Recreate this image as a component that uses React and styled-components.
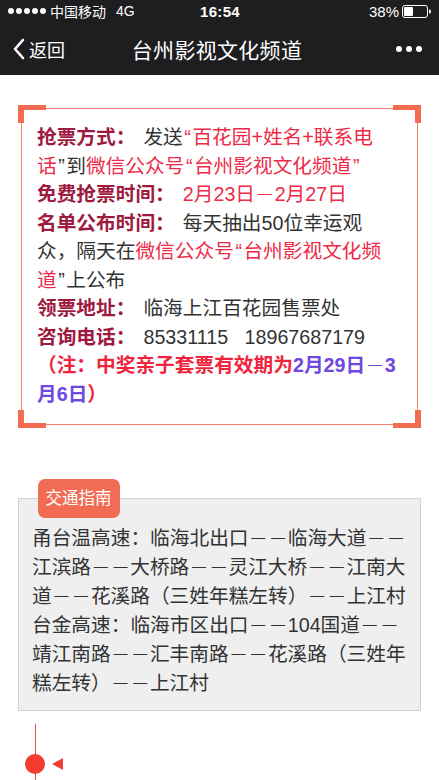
import React from 'react';
import styled, { createGlobalStyle } from 'styled-components';

const GlobalStyle = createGlobalStyle`
  html, body {
    margin: 0;
    padding: 0;
    background: #ffffff;
  }
  body {
    font-family: "Liberation Sans", "Noto Sans CJK SC", sans-serif;
    color: #333333;
    text-spacing-trim: space-all;
  }
`;

// splits a string on em dashes so each dash can be drawn with its own gaps
const withDashes = text =>
  text.split('—').flatMap((part, i) =>
    i === 0 ? [part] : [<Dash key={i}>—</Dash>, part]
  );

class App extends React.Component {
  render() {
    return (
      <Page>
        <GlobalStyle />
        <StatusBar>
          <Carrier>
            <Signal>
              {[0, 1, 2, 3, 4].map(i => (
                <SignalDot key={i} />
              ))}
            </Signal>
            <span>中国移动</span>
            <Network>4G</Network>
          </Carrier>
          <Clock>16:54</Clock>
          <Power>
            <span>38%</span>
            <svg width="30" height="13" viewBox="0 0 30 13">
              <rect x="0.5" y="0.5" width="25" height="12" rx="2.5" fill="none" stroke="#fff" strokeWidth="1" />
              <rect x="2" y="2" width="9" height="9" rx="1" fill="#fff" />
              <rect x="27" y="4.5" width="1.8" height="4" rx="0.8" fill="#fff" />
            </svg>
          </Power>
        </StatusBar>

        <NavBar>
          <Back>
            <svg width="14" height="22" viewBox="0 0 14 22">
              <polyline points="11,2 3,11 11,20" fill="none" stroke="#fff" strokeWidth="2.6" strokeLinecap="round" strokeLinejoin="round" />
            </svg>
            <span>返回</span>
          </Back>
          <NavTitle>台州影视文化频道</NavTitle>
          <More>
            <MoreDot />
            <MoreDot />
            <MoreDot />
          </More>
        </NavBar>

        <Frame>
          <Corner top left />
          <Corner top right />
          <Corner bottom left />
          <Corner bottom right />
          <FrameBody>
            <Line>
              <Label>抢票方式：</Label>发送<Red><Quote>“</Quote>百花园+姓名+联系电话</Red><Quote>”</Quote>到
              <Red>微信公众号<Quote>“</Quote>台州影视文化频道<Quote>”</Quote></Red>
            </Line>
            <Line>
              <Label>免费抢票时间：</Label>
              <Red>{withDashes('2月23日—2月27日')}</Red>
            </Line>
            <Line>
              <Label>名单公布时间：</Label>每天抽出50位幸运观众，隔天在
              <Red>微信公众号<Quote>“</Quote>台州影视文化频道</Red><Quote>”</Quote>上公布
            </Line>
            <Line>
              <Label>领票地址：</Label>临海上江百花园售票处
            </Line>
            <Line>
              <Label>咨询电话：</Label>85331115{'\u00a0\u00a0\u00a0'}18967687179
            </Line>
            <Line>
              <Note>（注：中奖亲子套票有效期为</Note>
              <Purple>{withDashes('2月29日—3月6日')}</Purple>
              <Note>）</Note>
            </Line>
          </FrameBody>
        </Frame>

        <Guide>
          <Tab>交通指南</Tab>
          <GuideText>
            {withDashes(
              '甬台温高速：临海北出口——临海大道——江滨路——大桥路——灵江大桥——江南大道——花溪路（三姓年糕左转）——上江村'
            )}
          </GuideText>
          <GuideText>
            {withDashes(
              '台金高速：临海市区出口——104国道——靖江南路——汇丰南路——花溪路（三姓年糕左转）——上江村'
            )}
          </GuideText>
        </Guide>

        <Timeline>
          <Node>
            <NodeDot />
            <Pointer />
          </Node>
          <TimelineCard />
        </Timeline>
      </Page>
    );
  }
}

const Page = styled.div`
  width: 439px;
  height: 780px;
  overflow: hidden;
`;

const StatusBar = styled.div`
  height: 22px;
  background: #1e1e21;
  color: #ffffff;
  display: flex;
  align-items: center;
  justify-content: space-between;
  padding: 0 7px 0 8px;
  font-size: 14px;
`;

const Carrier = styled.div`
  display: flex;
  align-items: center;
  gap: 3px;
  width: 150px;
`;

const Signal = styled.div`
  display: flex;
  gap: 2px;
  margin-right: 1px;
`;

const SignalDot = styled.span`
  width: 6px;
  height: 6px;
  border-radius: 50%;
  background: #ffffff;
`;

const Network = styled.span`
  margin-left: 7px;
  font-size: 14px;
`;

const Clock = styled.div`
  font-size: 15px;
  font-weight: 700;
  letter-spacing: 0.3px;
`;

const Power = styled.div`
  width: 150px;
  display: flex;
  justify-content: flex-end;
  align-items: center;
  gap: 3px;
  font-size: 15px;
`;

const NavBar = styled.div`
  height: 53px;
  background: #1e1e21;
  color: #ffffff;
  display: flex;
  align-items: center;
  justify-content: space-between;
  padding: 0 17px 0 12px;
`;

const Back = styled.div`
  width: 100px;
  display: flex;
  align-items: center;
  gap: 3px;
  font-size: 18px;
`;

const NavTitle = styled.div`
  font-size: 21px;
  letter-spacing: 0.3px;
`;

const More = styled.div`
  width: 100px;
  display: flex;
  justify-content: flex-end;
  gap: 4px;
`;

const MoreDot = styled.span`
  width: 6px;
  height: 6px;
  border-radius: 50%;
  background: #ffffff;
`;

const Frame = styled.div`
  position: relative;
  margin: 30px 18px 0;
  padding: 3px;
`;

const Corner = styled.span`
  position: absolute;
  width: 28px;
  height: 18px;
  border-color: #f26c52;
  border-style: solid;
  border-width: 0;
  ${props => (props.top ? 'top: 0;' : 'bottom: 0;')}
  ${props => (props.left ? 'left: 0;' : 'right: 0;')}
  ${props => (props.top ? 'border-top-width: 5px;' : 'border-bottom-width: 5px;')}
  ${props => (props.left ? 'border-left-width: 6px;' : 'border-right-width: 6px;')}
  box-sizing: border-box;
`;

const FrameBody = styled.div`
  border: 1px solid #f4836f;
  padding: 14px 17px 16px 15px;
  font-size: 19.7px;
  line-height: 28.5px;
  color: #333333;
`;

const Line = styled.p`
  margin: 0;
`;

const Label = styled.span`
  font-weight: 700;
  color: #9e1a3f;
  margin-right: 8px;
`;

const Red = styled.span`
  color: #ee2a48;
`;

const Quote = styled.span`
  margin: 0 1.5px;
`;

const Note = styled.span`
  font-weight: 700;
  color: #f0243c;
`;

const Purple = styled.span`
  font-weight: 700;
  color: #6e48e0;
`;

const Dash = styled.span`
  font-family: "Liberation Sans", sans-serif;
  font-weight: 400;
  font-size: 14px;
  line-height: 0;
  margin: 0 2.8px;
  vertical-align: 3px;
`;

const Guide = styled.div`
  margin: 70px 18px 0;
  border: 1px solid #cdd3de;
  background: #efefef;
  padding: 0 10px 12px 13px;
`;

const Tab = styled.div`
  width: fit-content;
  margin: -20px 0 6px 5.5px;
  height: 39px;
  line-height: 39px;
  padding: 0 8px;
  border-radius: 7px;
  background: #f26c55;
  color: #ffffff;
  font-size: 16.5px;
`;

const GuideText = styled.p`
  margin: 0;
  font-size: 19.7px;
  line-height: 29px;
  color: #333333;
`;

const Timeline = styled.div`
  margin: 13px 0 0 35px;
  border-left: 1px solid #f0493a;
  padding-top: 30px;
`;

const Node = styled.div`
  display: flex;
  align-items: center;
  margin-left: -11px;
`;

const NodeDot = styled.span`
  width: 20px;
  height: 20px;
  border-radius: 50%;
  background: #f23d30;
`;

const Pointer = styled.span`
  margin-left: 7px;
  width: 0;
  height: 0;
  border-top: 6px solid transparent;
  border-bottom: 6px solid transparent;
  border-right: 11px solid #f23d30;
`;

const TimelineCard = styled.div`
  margin: 6px 22px 0 4px;
  height: 80px;
  border-radius: 10px;
  background: #f23d30;
`;

export default App;
